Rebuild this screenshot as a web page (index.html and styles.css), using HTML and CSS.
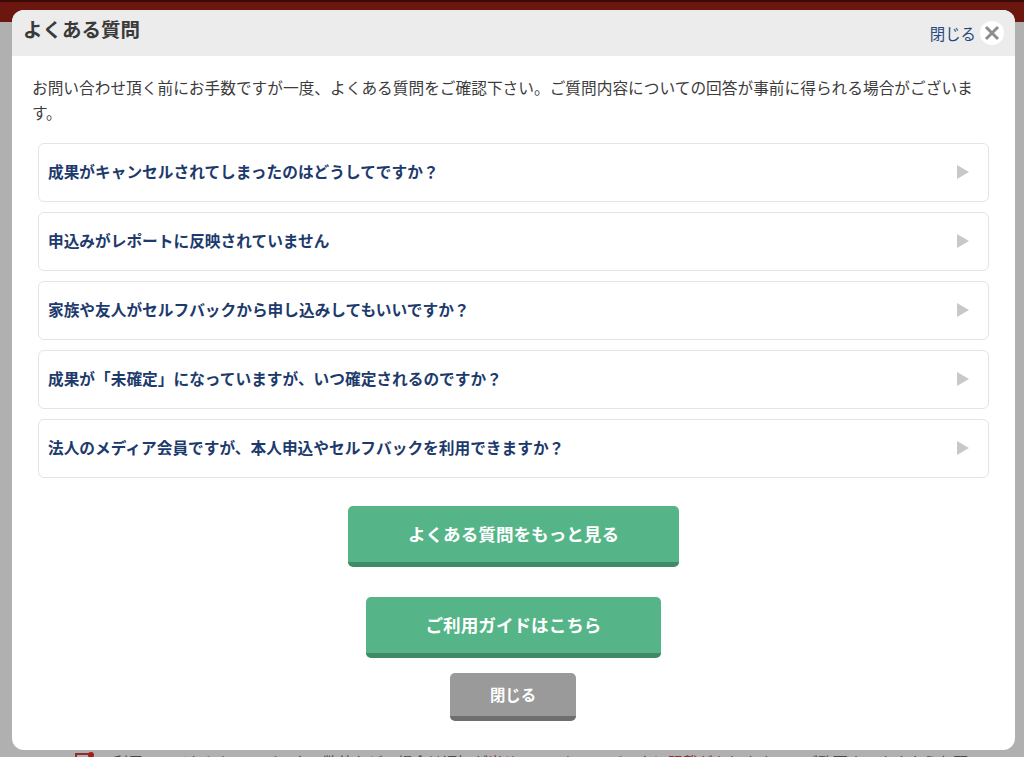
FILE: index.html
```html
<!DOCTYPE html>
<html lang="ja">
<head>
    <meta charset="UTF-8">
    <meta name="viewport" content="width=device-width, initial-scale=1.0">
    <title>よくある質問</title>
    <link rel="stylesheet" href="styles.css">
</head>
<body>
    <div class="page">
        <div class="page-header"></div>
        <div class="page-note">
            <span class="note-icon"></span>
            <span>利用ページからセルフバックの数値などの場合は通知が<em>当サイトのセルフバックに記載があります</em>のでご覧下さいますようお願い</span>
        </div>
    </div>

    <div class="modal">
        <div class="modal-header">
            <h1>よくある質問</h1>
            <a class="close-link" href="#">閉じる
                <span class="close-icon">
                    <svg width="16" height="16" viewBox="0 0 16 16"><path d="M2 2L14 14M14 2L2 14" stroke="#8e8e8e" stroke-width="3"/></svg>
                </span>
            </a>
        </div>
        <div class="modal-body">
            <p class="intro">お問い合わせ頂く前にお手数ですが一度、よくある質問をご確認下さい。ご質問内容についての回答が事前に得られる場合がございます。</p>

            <div class="faq-list">
                <a class="faq-item" href="#">成果がキャンセルされてしまったのはどうしてですか？<span class="arrow"></span></a>
                <a class="faq-item" href="#">申込みがレポートに反映されていません<span class="arrow"></span></a>
                <a class="faq-item" href="#">家族や友人がセルフバックから申し込みしてもいいですか？<span class="arrow"></span></a>
                <a class="faq-item" href="#">成果が「未確定」になっていますが、いつ確定されるのですか？<span class="arrow"></span></a>
                <a class="faq-item" href="#">法人のメディア会員ですが、本人申込やセルフバックを利用できますか？<span class="arrow"></span></a>
            </div>

            <div class="actions">
                <a class="btn btn-more" href="#">よくある質問をもっと見る</a>
                <a class="btn btn-guide" href="#">ご利用ガイドはこちら</a>
                <a class="btn btn-close" href="#">閉じる</a>
            </div>
        </div>
    </div>
</body>
</html>
```
FILE: styles.css
```css
* {
    margin: 0;
    padding: 0;
    box-sizing: border-box;
}

html, body {
    height: 100%;
    overflow: hidden;
}

body {
    font-family: "Noto Sans CJK JP", "Liberation Sans", sans-serif;
    background-color: #b0b0b0;
    color: #333;
}

a {
    text-decoration: none;
}

.page {
    height: 757px;
    display: flex;
    flex-direction: column;
    justify-content: space-between;
}

.page-header {
    height: 22px;
    background-color: #6c1610;
    border-top: 2px solid #3a0a08;
}

.page-note {
    display: flex;
    align-items: flex-start;
    gap: 20px;
    height: 4px;
    padding-left: 75px;
    font-size: 15px;
    line-height: 17px;
    color: #4a4a4a;
    white-space: nowrap;
}

.page-note em {
    font-style: normal;
    color: #9a2c2a;
}

.note-icon {
    position: relative;
    width: 18px;
    height: 14px;
    border: 2px solid #8f2f2c;
    flex-shrink: 0;
}

.note-icon::after {
    content: "";
    position: absolute;
    top: -3px;
    right: -3px;
    width: 6px;
    height: 6px;
    border-radius: 50%;
    background-color: #a01f1c;
}

.modal {
    position: absolute;
    top: 10px;
    left: 12px;
    width: 1003px;
    height: 740px;
    background-color: #fff;
    border-radius: 12px;
    overflow: hidden;
}

.modal-header {
    height: 46px;
    background-color: #ececec;
    display: flex;
    justify-content: space-between;
    align-items: center;
    padding: 0 11px;
}

.modal-header h1 {
    font-size: 19.5px;
    font-weight: 700;
    color: #3a3a3a;
    padding-bottom: 9px;
}

.close-link {
    display: flex;
    align-items: center;
    gap: 4px;
    font-size: 15.4px;
    color: #27497c;
}

.close-icon {
    width: 24px;
    height: 24px;
    border-radius: 50%;
    background-color: #fff;
    display: flex;
    align-items: center;
    justify-content: center;
}

.modal-body {
    padding: 19px 26px 0;
}

.intro {
    font-size: 15.7px;
    line-height: 25px;
    margin-left: -6px;
    margin-right: 4px;
    color: #3c3c3c;
}

.faq-list {
    display: flex;
    flex-direction: column;
    gap: 10px;
    margin-top: 18px;
}

.faq-item {
    height: 59px;
    display: flex;
    justify-content: space-between;
    align-items: center;
    padding: 0 19px 2px 9px;
    border: 1px solid #e4e4e4;
    border-radius: 6px;
    font-size: 15.7px;
    font-weight: 700;
    color: #1d3a6c;
}

.arrow {
    width: 0;
    height: 0;
    border-left: 12px solid #c8c8c8;
    border-top: 7.5px solid transparent;
    border-bottom: 7.5px solid transparent;
}

.actions {
    display: flex;
    flex-direction: column;
    align-items: center;
    margin-top: 28px;
}

.btn {
    display: flex;
    justify-content: center;
    align-items: center;
    border-radius: 5px;
    font-weight: 700;
    color: #fff;
}

.btn-more,
.btn-guide {
    height: 61px;
    padding-bottom: 2px;
    font-size: 17.6px;
    background-color: #55b588;
    border-bottom: 5px solid #3f8a67;
}

.btn-more {
    width: 331px;
}

.btn-guide {
    width: 295px;
    margin-top: 30px;
}

.btn-close {
    width: 126px;
    height: 48px;
    margin-top: 15px;
    margin-right: 1px;
    padding-bottom: 1px;
    font-size: 15.4px;
    background-color: #9a9a9a;
    border-bottom: 5px solid #6e6e6e;
}
```
